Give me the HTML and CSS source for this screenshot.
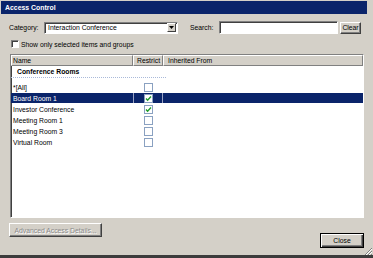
FILE: index.html
```html
<!DOCTYPE html>
<html lang="en">
    <head>
        <title>Access Control</title>
        <link rel="stylesheet" href="styles.css">
    </head>
    <body>
        <div class="window">
            <div class="titlebar">Access Control</div>

            <div class="content">
                <div class="toolbar">
                    <span class="cat-label">Category:</span>
                    <div class="select">
                        <span class="select-text">Interaction Conference</span>
                        <span class="arrow"><svg width="5" height="3" viewBox="0 0 5 3"><path d="M0 0h5L2.5 3z" fill="#000"/></svg></span>
                    </div>
                    <span class="search-label">Search:</span>
                    <div class="input"></div>
                    <button class="btn clear">Clear</button>
                </div>

                <div class="filter">
                    <span class="classic-check"></span>
                    <span>Show only selected items and groups</span>
                </div>

                <div class="list">
                    <div class="head">
                        <div class="col name">Name</div>
                        <div class="col restrict">Restrict</div>
                        <div class="col inherited">Inherited From</div>
                    </div>
                    <div class="group">Conference Rooms</div>
                    <div class="dots"></div>

                    <div class="row">
                        <div class="name">*[All]</div>
                        <div class="restrict"><span class="box"></span></div>
                    </div>
                    <div class="row selected">
                        <div class="name">Board Room 1</div>
                        <div class="restrict"><span class="box"><svg width="7" height="7" viewBox="0 0 7 7"><path d="M1 3.5l1.6 1.7L6 1.5" fill="none" stroke="#1f9c2a" stroke-width="1.4"/></svg></span></div>
                    </div>
                    <div class="row">
                        <div class="name">Investor Conference</div>
                        <div class="restrict"><span class="box"><svg width="7" height="7" viewBox="0 0 7 7"><path d="M1 3.5l1.6 1.7L6 1.5" fill="none" stroke="#1f9c2a" stroke-width="1.4"/></svg></span></div>
                    </div>
                    <div class="row">
                        <div class="name">Meeting Room 1</div>
                        <div class="restrict"><span class="box"></span></div>
                    </div>
                    <div class="row">
                        <div class="name">Meeting Room 3</div>
                        <div class="restrict"><span class="box"></span></div>
                    </div>
                    <div class="row">
                        <div class="name">Virtual Room</div>
                        <div class="restrict"><span class="box"></span></div>
                    </div>
                </div>

                <div class="footer">
                    <button class="btn advanced" disabled>Advanced Access Details...</button>
                    <button class="btn close">Close</button>
                </div>
            </div>

            <svg class="grip" width="8" height="8" viewBox="0 0 8 8">
                <path d="M8 1L1 8M8 4L4 8M8 7L7 8" stroke="#808080" stroke-width="1"/>
                <path d="M8 2L2 8M8 5L5 8" stroke="#fff" stroke-width="1"/>
            </svg>
        </div>
    </body>
</html>
```

FILE: styles.css
```css
body {
    margin: 0;
    background-color: #d4d0c8;
    font-family: "Liberation Sans", Arial, sans-serif;
    font-size: 6.8px;
    color: #000;
}

.window {
    position: relative;
    height: 258px;
    box-sizing: border-box;
    padding-top: 1px;
    padding-left: 1px;
    border-bottom: 3px solid #3c3c3c;
}

.titlebar {
    height: 13px;
    margin-right: 6px;
    padding-left: 4px;
    background-color: #0a246a;
    color: #fff;
    font-weight: bold;
    font-size: 6.9px;
    line-height: 13px;
}

.content {
    padding-left: 8px;
}

.toolbar {
    display: flex;
    align-items: center;
    height: 13px;
    margin-top: 7px;
}

.cat-label {
    width: 35px;
}

.select, .input {
    box-sizing: border-box;
    background-color: #fff;
    border: 1px solid;
    border-color: #808080 #fff #fff #808080;
    box-shadow: inset 1px 1px #404040;
}

.select {
    display: flex;
    align-items: center;
    width: 134px;
    height: 12px;
    padding: 0 1px 0 3px;
}

.arrow {
    display: flex;
    align-items: center;
    justify-content: center;
    margin-left: auto;
    width: 9px;
    height: 9px;
    box-sizing: border-box;
    background-color: #d4d0c8;
    border: 1px solid;
    border-color: #fff #404040 #404040 #fff;
}

.search-label {
    width: 29px;
    margin-left: 12px;
}

.input {
    width: 119px;
    height: 13px;
}

.btn {
    padding: 0;
    font: inherit;
    color: #000;
    background-color: #d4d0c8;
    border: 1px solid;
    border-color: #fff #404040 #404040 #fff;
    box-shadow: inset -1px -1px #808080;
}

.clear {
    width: 21px;
    height: 12px;
    margin-left: 2px;
}

.filter {
    display: flex;
    align-items: center;
    height: 8px;
    margin-top: 6px;
    margin-left: 2px;
}

.classic-check {
    width: 8px;
    height: 8px;
    box-sizing: border-box;
    margin-right: 2px;
    background-color: #fff;
    border: 1px solid;
    border-color: #808080 #fff #fff #808080;
    box-shadow: inset 1px 1px #404040;
}

.list {
    width: 354px;
    height: 164px;
    box-sizing: border-box;
    margin-top: 6px;
    margin-left: 1px;
    background-color: #fff;
    border: 1px solid;
    border-color: #808080 #fff #fff #808080;
    box-shadow: inset 1px 1px #404040;
}

.head {
    display: flex;
    height: 11px;
    background-color: #d4d0c8;
}

.head .col {
    box-sizing: border-box;
    padding-left: 1px;
    line-height: 9px;
    border: 1px solid;
    border-color: #fff #808080 #808080 #fff;
}

.name {
    width: 122px;
    box-sizing: border-box;
}

.restrict {
    width: 30px;
    box-sizing: border-box;
}

.head .restrict {
    padding-left: 3px;
}

.head .inherited {
    flex: 1;
    padding-left: 4px;
}

.group {
    height: 11px;
    line-height: 11px;
    padding-left: 6px;
    font-weight: bold;
}

.dots {
    width: 155px;
    margin-bottom: 4px;
    border-top: 1px dotted #a9b9d9;
}

.row {
    display: flex;
    align-items: center;
    height: 11px;
}

.row .name {
    padding-left: 2px;
}

.row .restrict {
    display: flex;
    align-items: center;
    justify-content: center;
    align-self: stretch;
}

.box {
    display: flex;
    align-items: center;
    justify-content: center;
    width: 9px;
    height: 9px;
    box-sizing: border-box;
    background-color: #fff;
    border: 1px solid #8aa1c1;
}

.row.selected {
    height: 10px;
    margin-bottom: 1px;
    background-color: #0a246a;
    color: #fff;
}

.row.selected .restrict {
    box-shadow: inset 1px 0 #9aa3c4, inset -1px 0 #9aa3c4;
}

.footer {
    display: flex;
    justify-content: space-between;
    align-items: flex-start;
    width: 355px;
    margin-top: 5px;
}

.advanced {
    width: 93px;
    height: 14px;
    color: #8a8a8a;
    text-shadow: 1px 1px #fff;
}

.close {
    width: 44px;
    height: 15px;
    margin-top: 10px;
    border: 1px solid #000;
    box-shadow: inset 1px 1px #fff, inset -1px -1px #404040, inset -2px -2px #808080;
}

.grip {
    position: absolute;
    right: 1px;
    bottom: 0;
}
```
